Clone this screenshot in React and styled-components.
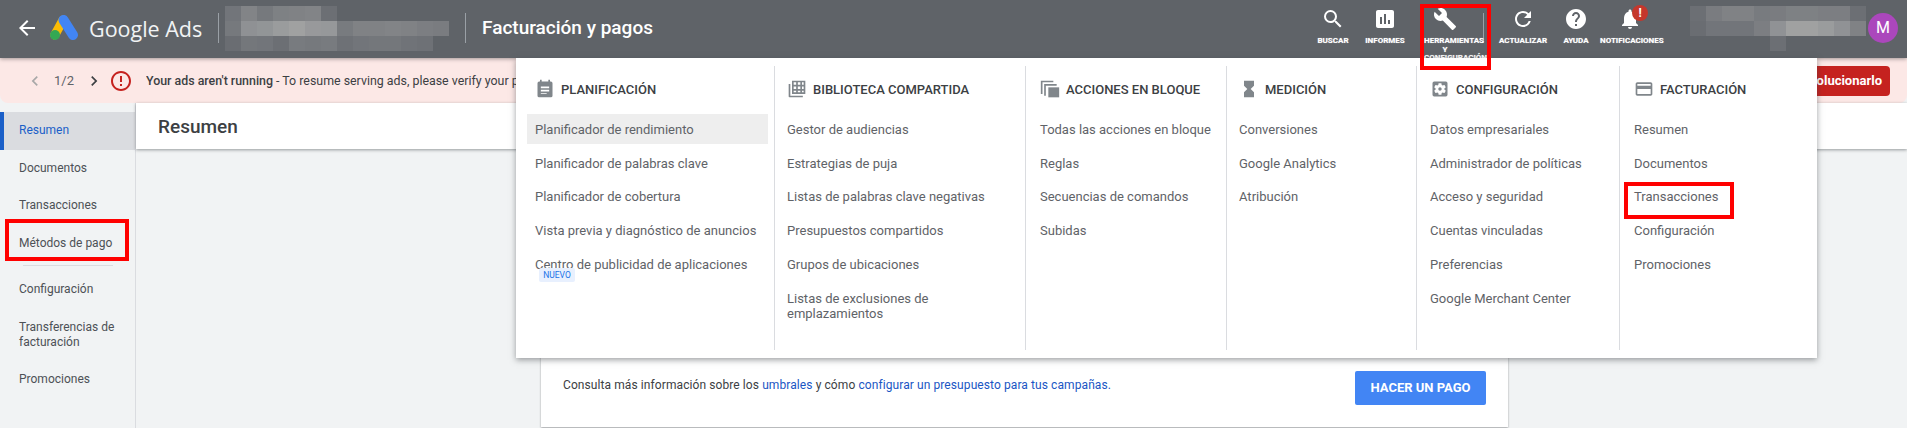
import React from 'react';
import styled, { createGlobalStyle } from 'styled-components';
import {
  MdArrowBack, MdSearch, MdAssessment, MdBuild, MdRefresh, MdHelp, MdNotifications,
  MdChevronLeft, MdChevronRight, MdErrorOutline, MdHourglassFull,
  MdSettingsApplications, MdPayment,
} from 'react-icons/md';

const GlobalStyle = createGlobalStyle`
  html, body { margin: 0; padding: 0; background: #f1f3f4; }
  body { font-family: Roboto, "Liberation Sans", sans-serif; overflow: hidden; }
`;

const Page = styled.div`
  position: relative;
  width: 1907px;
  height: 428px;
  overflow: hidden;
  display: flex;
  flex-direction: column;
`;

const Header = styled.header`
  position: relative;
  z-index: 2;
  flex: none;
  height: 58px;
  background: #5f6368;
  box-shadow: 0 1px 4px rgba(0, 0, 0, 0.35);
  display: flex;
  align-items: flex-start;
  color: #fff;
`;

const BackIcon = styled(MdArrowBack)`
  font-size: 24px;
  margin: 16px 0 0 15px;
  flex: none;
`;

const LogoMark = styled.svg`
  width: 28px;
  height: 25px;
  margin: 15px 0 0 11px;
  flex: none;
`;

const LogoText = styled.span`
  font-family: "Open Sans", Roboto, sans-serif;
  font-size: 21.5px;
  line-height: 58px;
  margin-left: 11px;
  width: 112px;
  white-space: nowrap;
  color: #f1f3f4;
  flex: none;
`;

const HeaderRule = styled.span`
  flex: none;
  width: 1px;
  height: 30px;
  margin: 13px 0 0 ${(p) => p.$left}px;
  background: #9aa0a6;
`;

const Mosaic = styled.div`
  flex: none;
  display: grid;
  grid-template-columns: repeat(${(p) => p.$cols}, 16px);
  grid-auto-rows: 15px;
  margin: 6px 0 0 ${(p) => p.$left}px;
`;

const MosaicCell = styled.span`
  background: ${(p) => p.$shade || 'transparent'};
`;

const PageTitle = styled.h1`
  margin: 0 0 0 16px;
  font-size: 19px;
  font-weight: 500;
  line-height: 56px;
  white-space: nowrap;
  color: #fff;
`;

const Tools = styled.nav`
  display: flex;
  align-items: flex-start;
  margin-left: auto;
`;

const Tool = styled.div`
  position: relative;
  flex: none;
  width: ${(p) => p.$w}px;
  margin-left: ${(p) => p.$ml || 0}px;
  display: flex;
  flex-direction: column;
  align-items: center;
  padding-top: 7px;
  font-size: 24px;
`;

const ToolLabel = styled.span`
  display: block;
  width: 100%;
  margin-top: 6px;
  font-size: 8px;
  font-weight: 700;
  line-height: 8.5px;
  text-align: center;
  color: #fff;
  text-shadow: 0 0 1px rgba(255, 255, 255, 0.6);
`;

const Badge = styled.span`
  position: absolute;
  top: 5px;
  left: 32px;
  width: 16px;
  height: 16px;
  border-radius: 50%;
  background: #c5372c;
  font-size: 12px;
  font-weight: 700;
  line-height: 16px;
  text-align: center;
  color: #fff;
`;

const Avatar = styled.span`
  flex: none;
  width: 30px;
  height: 30px;
  margin: 13px 9px 0 2px;
  border-radius: 50%;
  background: #ab47bc;
  font-size: 16px;
  line-height: 30px;
  text-align: center;
  color: #fff;
`;

const Banner = styled.div`
  flex: none;
  height: 45px;
  background: #fce8e6;
  border-radius: 0 0 8px 8px;
  box-sizing: border-box;
  display: flex;
  align-items: center;
  padding: 0 17px 0 25px;
  font-size: 12.4px;
  color: #3c4043;
`;

const Pager = styled.span`
  margin: 0 10px 0 9px;
  color: #5f6368;
  font-size: 13px;
`;

const FadedChevron = styled(MdChevronLeft)`
  font-size: 20px;
  color: #a8a8a8;
`;

const NextChevron = styled(MdChevronRight)`
  font-size: 20px;
  color: #3c4043;
`;

const AlertIcon = styled(MdErrorOutline)`
  font-size: 24px;
  color: #c5221f;
  margin-left: 5px;
`;

const BannerText = styled.span`
  margin-left: 13px;
  flex: 1;
  white-space: nowrap;
  overflow: hidden;
  b { font-weight: 500; }
`;

const FixButton = styled.span`
  flex: none;
  height: 30px;
  padding: 0 8px 0 20px;
  border-radius: 4px;
  background: #c5221f;
  font-size: 13px;
  font-weight: 700;
  line-height: 30px;
  color: #fff;
`;

const Body = styled.div`
  flex: 1;
  min-height: 0;
  display: flex;
`;

const Sidebar = styled.aside`
  flex: none;
  width: 136px;
  box-sizing: border-box;
  padding-top: 9px;
  background: #f1f3f4;
  border-right: 1px solid #dadce0;
`;

const SideItem = styled.div`
  box-sizing: border-box;
  height: ${(p) => p.$h || 37.5}px;
  display: flex;
  align-items: center;
  padding-left: ${(p) => (p.$active ? 15 : 19)}px;
  font-size: 12px;
  line-height: 15px;
  color: ${(p) => (p.$active ? '#1a5fc8' : '#4d5156')};
  background: ${(p) => (p.$active ? '#dadce0' : 'transparent')};
  border-left: ${(p) => (p.$active ? '4px solid #1a5fc8' : 'none')};
`;

const SideRule = styled.div`
  height: 1px;
  margin: 3px 22px 5px 23px;
  background: #dadce0;
`;

const Main = styled.main`
  flex: 1;
  min-width: 0;
  display: flex;
  flex-direction: column;
  background: #f1f3f4;
`;

const TitleBar = styled.div`
  flex: none;
  height: 46px;
  padding-left: 22px;
  background: #fff;
  box-shadow: 0 1px 3px rgba(60, 64, 67, 0.5);
  font-size: 19px;
  font-weight: 500;
  line-height: 47px;
  color: #3c4043;
`;

const Content = styled.div`
  flex: 1;
  min-height: 0;
  display: flex;
  padding: 20px 0 1px 405px;
`;

const Card = styled.section`
  width: 967px;
  box-sizing: border-box;
  padding: 0 22px 22px;
  background: #fff;
  box-shadow: 0 1px 2px rgba(60, 64, 67, 0.45);
  display: flex;
  align-items: flex-end;
  justify-content: space-between;
`;

const CardNote = styled.p`
  margin: 0 0 12px;
  font-size: 12px;
  letter-spacing: 0.09px;
  line-height: 16px;
  color: #3c4043;
  a { color: #1a56c4; text-decoration: none; }
`;

const PayButton = styled.span`
  width: 131px;
  height: 34px;
  border-radius: 2px;
  background: #4285f4;
  font-size: 13px;
  font-weight: 700;
  line-height: 34px;
  text-align: center;
  color: #fff;
`;

const ToolsMenu = styled.div`
  position: absolute;
  z-index: 3;
  top: 58px;
  left: 516px;
  width: 1301px;
  height: 300px;
  box-sizing: border-box;
  padding: 8px 0;
  background: #fff;
  box-shadow: 0 2px 6px rgba(60, 64, 67, 0.5);
  display: grid;
  grid-template-columns: 258px 251px 201px 190px 203px 198px;
`;

const MenuColumn = styled.div`
  box-sizing: border-box;
  padding: 11px 6px 0 ${(p) => p.$pad}px;
  border-left: ${(p) => (p.$first ? 'none' : '1px solid #dadce0')};
`;

const MenuHeading = styled.div`
  height: 24px;
  margin: 0 0 13px 8px;
  display: flex;
  align-items: center;
  gap: 6px;
  font-size: 13px;
  font-weight: 500;
  white-space: nowrap;
  color: #3c4043;
  svg { flex: none; width: 20px; height: 20px; color: #80868b; }
`;

const MenuItem = styled.div`
  position: relative;
  padding: 7.5px 8px;
  margin-bottom: 4px;
  font-size: 13px;
  line-height: 15px;
  color: #5f6368;
  background: ${(p) => (p.$selected ? '#eeeeee' : 'transparent')};
  &:nth-child(3) { margin-bottom: 3px; }
`;

const NewTag = styled.span`
  position: absolute;
  top: 19px;
  left: 12px;
  width: 36px;
  height: 14px;
  border-radius: 2px;
  background: #e8f0fe;
  font-size: 8.5px;
  line-height: 15px;
  text-align: center;
  color: #1a73e8;
`;

const RedBox = styled.div`
  position: absolute;
  z-index: 4;
  box-sizing: border-box;
  border: 4px solid #ff0000;
  left: ${(p) => p.$x}px;
  top: ${(p) => p.$y}px;
  width: ${(p) => p.$w}px;
  height: ${(p) => p.$h}px;
`;

const accountCells = [
  ['#72757a', '#828487', '#76797d', '#7e8184', '#808285', '#828487', '#6c6f74', null, null, null, null, null, null, null],
  ['#76797d', '#8f9194', '#929597', '#9a9c9d', '#a0a1a1', '#98999b', '#96989a', '#787b7f', '#808285', '#808285', '#828487', '#808285', '#7c7e82', '#7a7c80'],
  ['#6a6d72', '#74777b', '#72757a', '#6c6f74', '#787b7f', '#76797d', '#787b7f', '#6e7176', '#72757a', '#74777b', '#74777b', '#707378', '#6e7176', null],
];

const userCells = [
  ['#6c6f74', '#7a7c80', '#808285', '#808285', '#787b7f', '#7a7c80', '#7e8184', '#7e8184', '#7c7e82', '#7c7e82', '#6c6f74'],
  ['#6a6d72', '#72757a', '#72757a', '#72757a', '#7c7e82', '#909295', '#a0a1a1', '#a0a1a1', '#9a9c9d', '#909295', '#808285'],
  [null, null, null, null, null, '#6c6f74', null, null, null, null, null],
];

const PlanIcon = () => (
  <svg viewBox="0 0 24 24" fill="currentColor">
    <path
      fillRule="evenodd"
      d="M6 1h2v2h8V1h2v2h1a2 2 0 0 1 2 2v15a2 2 0 0 1-2 2H5a2 2 0 0 1-2-2V5a2 2 0 0 1 2-2h1V1zM7 9v2h10V9H7zm0 4v2h10v-2H7zm0 4v1h7v-1H7z"
    />
  </svg>
);

const LibraryIcon = () => (
  <svg viewBox="0 0 24 24" fill="currentColor">
    <path d="M2 6h2v14h15v2H3a1 1 0 0 1-1-1V6z" />
    <path d="M6 2h16v16H6V2zm2 2v3h3V4H8zm5 0v3h3V4h-3zm5 0v3h2V4h-2zM8 9v3h3V9H8zm5 0v3h3V9h-3zm5 0v3h2V9h-2zM8 14v2h3v-2H8zm5 0v2h3v-2h-3zm5 0v2h2v-2h-2z" />
  </svg>
);

const BulkIcon = () => (
  <svg viewBox="0 0 24 24" fill="currentColor">
    <path d="M1 2h15v2H3v14H1V2z" />
    <path d="M5 6h15v2H7v12H5V6z" />
    <path d="M10 10h13v12H10z" />
  </svg>
);

const menus = [
  {
    title: 'PLANIFICACIÓN', icon: <PlanIcon />, pad: 11,
    items: ['Planificador de rendimiento', 'Planificador de palabras clave', 'Planificador de cobertura', 'Vista previa y diagnóstico de anuncios', 'Centro de publicidad de aplicaciones'],
  },
  {
    title: 'BIBLIOTECA COMPARTIDA', icon: <LibraryIcon />, pad: 4,
    items: ['Gestor de audiencias', 'Estrategias de puja', 'Listas de palabras clave negativas', 'Presupuestos compartidos', 'Grupos de ubicaciones', 'Listas de exclusiones de emplazamientos'],
  },
  {
    title: 'ACCIONES EN BLOQUE', icon: <BulkIcon />, pad: 6,
    items: ['Todas las acciones en bloque', 'Reglas', 'Secuencias de comandos', 'Subidas'],
  },
  {
    title: 'MEDICIÓN', icon: <MdHourglassFull />, pad: 4,
    items: ['Conversiones', 'Google Analytics', 'Atribución'],
  },
  {
    title: 'CONFIGURACIÓN', icon: <MdSettingsApplications />, pad: 5,
    items: ['Datos empresariales', 'Administrador de políticas', 'Acceso y seguridad', 'Cuentas vinculadas', 'Preferencias', 'Google Merchant Center'],
  },
  {
    title: 'FACTURACIÓN', icon: <MdPayment />, pad: 6,
    items: ['Resumen', 'Documentos', 'Transacciones', 'Configuración', 'Promociones'],
  },
];

function renderCells(rows) {
  return rows.flat().map((shade, i) => <MosaicCell key={i} $shade={shade} />);
}

export default function App() {
  return (
    <Page>
      <GlobalStyle />
      <Header>
        <BackIcon />
        <LogoMark viewBox="0 0 28 25">
          <path d="M13 5 L4.8 20" stroke="#fbbc04" strokeWidth="9" strokeLinecap="round" />
          <path d="M13.5 5 L23 20" stroke="#4285f4" strokeWidth="10" strokeLinecap="round" />
          <circle cx="5" cy="20" r="5" fill="#34a853" />
        </LogoMark>
        <LogoText>Google Ads</LogoText>
        <HeaderRule $left={17} />
        <Mosaic $cols={14} $left={6}>{renderCells(accountCells)}</Mosaic>
        <HeaderRule $left={16} />
        <PageTitle>Facturación y pagos</PageTitle>
        <Tools>
          <Tool $w={52}><MdSearch /><ToolLabel>BUSCAR</ToolLabel></Tool>
          <Tool $w={52}><MdAssessment /><ToolLabel>INFORMES</ToolLabel></Tool>
          <Tool $w={42} $ml={13}><MdBuild /><ToolLabel>HERRAMIENTAS Y CONFIGURACIÓN</ToolLabel></Tool>
          <HeaderRule $left={17} />
          <Tool $w={54} $ml={12}><MdRefresh /><ToolLabel>ACTUALIZAR</ToolLabel></Tool>
          <Tool $w={32} $ml={10}><MdHelp /><ToolLabel>AYUDA</ToolLabel></Tool>
          <Tool $w={60} $ml={8}>
            <MdNotifications />
            <ToolLabel>NOTIFICACIONES</ToolLabel>
            <Badge>!</Badge>
          </Tool>
        </Tools>
        <Mosaic $cols={11} $left={30}>{renderCells(userCells)}</Mosaic>
        <Avatar>M</Avatar>
      </Header>

      <Banner>
        <FadedChevron />
        <Pager>1/2</Pager>
        <NextChevron />
        <AlertIcon />
        <BannerText><b>Your ads aren't running</b> - To resume serving ads, please verify your payment information</BannerText>
        <FixButton>Solucionarlo</FixButton>
      </Banner>

      <Body>
        <Sidebar>
          <SideItem $active>Resumen</SideItem>
          <SideItem>Documentos</SideItem>
          <SideItem>Transacciones</SideItem>
          <SideItem>Métodos de pago</SideItem>
          <SideRule />
          <SideItem>Configuración</SideItem>
          <SideItem $h={52}>Transferencias de<br />facturación</SideItem>
          <SideItem>Promociones</SideItem>
        </Sidebar>
        <Main>
          <TitleBar>Resumen</TitleBar>
          <Content>
            <Card>
              <CardNote>
                Consulta más información sobre los <a href="#u">umbrales</a> y cómo <a href="#c">configurar un presupuesto para tus campañas.</a>
              </CardNote>
              <PayButton>HACER UN PAGO</PayButton>
            </Card>
          </Content>
        </Main>
      </Body>

      <ToolsMenu>
        {menus.map((menu, i) => (
          <MenuColumn key={menu.title} $pad={menu.pad} $first={i === 0}>
            <MenuHeading>{menu.icon}{menu.title}</MenuHeading>
            {menu.items.map((item, j) => (
              <MenuItem key={item} $selected={i === 0 && j === 0}>
                {item}
                {item.startsWith('Centro') && <NewTag>NUEVO</NewTag>}
              </MenuItem>
            ))}
          </MenuColumn>
        ))}
      </ToolsMenu>

      <RedBox $x={1420} $y={4} $w={71} $h={66} />
      <RedBox $x={5} $y={219} $w={124} $h={42} />
      <RedBox $x={1624} $y={182} $w={110} $h={37} />
    </Page>
  );
}
